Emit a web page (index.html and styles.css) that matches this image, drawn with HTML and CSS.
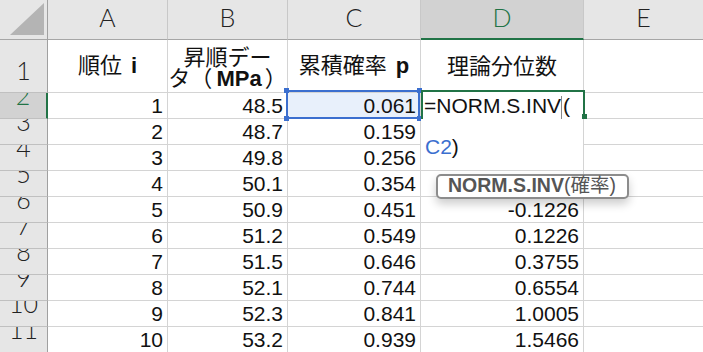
FILE: index.html
```html
<!DOCTYPE html>
<html lang="ja">
<head>
    <meta charset="UTF-8">
    <title>正規確率プロット</title>
    <link rel="stylesheet" href="styles.css">
</head>
<body>
    <div class="sheet">
        <div class="corner"><svg width="47" height="39" viewBox="0 0 47 39"><polygon points="10,35 44,35 44,3" fill="#b4b4b4"/></svg></div>
        <div class="col-head">A</div>
        <div class="col-head">B</div>
        <div class="col-head">C</div>
        <div class="col-head sel">D</div>
        <div class="col-head">E</div>

        <div class="row-head first"><span>1</span></div>
        <div class="cell title"><span>順位 <b>i</b></span></div>
        <div class="cell title two"><span>昇順デー<br>タ（<b>MPa</b>）</span></div>
        <div class="cell title"><span>累積確率 <b>p</b></span></div>
        <div class="cell title"><span>理論分位数</span></div>
        <div class="cell"></div>

        <div class="row-head sel"><span>2</span></div>
        <div class="cell">1</div>
        <div class="cell">48.5</div>
        <div class="cell ref-cell">0.061</div>
        <div class="cell"></div>
        <div class="cell"></div>

        <div class="row-head"><span>3</span></div>
        <div class="cell">2</div>
        <div class="cell">48.7</div>
        <div class="cell">0.159</div>
        <div class="cell">-1.0005</div>
        <div class="cell"></div>

        <div class="row-head"><span>4</span></div>
        <div class="cell">3</div>
        <div class="cell">49.8</div>
        <div class="cell">0.256</div>
        <div class="cell">-0.6554</div>
        <div class="cell"></div>

        <div class="row-head"><span>5</span></div>
        <div class="cell">4</div>
        <div class="cell">50.1</div>
        <div class="cell">0.354</div>
        <div class="cell">-0.3755</div>
        <div class="cell"></div>

        <div class="row-head"><span>6</span></div>
        <div class="cell">5</div>
        <div class="cell">50.9</div>
        <div class="cell">0.451</div>
        <div class="cell">-0.1226</div>
        <div class="cell"></div>

        <div class="row-head"><span>7</span></div>
        <div class="cell">6</div>
        <div class="cell">51.2</div>
        <div class="cell">0.549</div>
        <div class="cell">0.1226</div>
        <div class="cell"></div>

        <div class="row-head"><span>8</span></div>
        <div class="cell">7</div>
        <div class="cell">51.5</div>
        <div class="cell">0.646</div>
        <div class="cell">0.3755</div>
        <div class="cell"></div>

        <div class="row-head"><span>9</span></div>
        <div class="cell">8</div>
        <div class="cell">52.1</div>
        <div class="cell">0.744</div>
        <div class="cell">0.6554</div>
        <div class="cell"></div>

        <div class="row-head"><span>10</span></div>
        <div class="cell">9</div>
        <div class="cell">52.3</div>
        <div class="cell">0.841</div>
        <div class="cell">1.0005</div>
        <div class="cell"></div>

        <div class="row-head"><span>11</span></div>
        <div class="cell">10</div>
        <div class="cell">53.2</div>
        <div class="cell">0.939</div>
        <div class="cell">1.5466</div>
        <div class="cell"></div>

        <!-- cell being edited in D2, with its reference on C2 -->
        <div class="ref-box"><i class="tl"></i><i class="tr"></i><i class="bl"></i><i class="br"></i></div>
        <div class="editor">
            <div class="f1">=NORM.S.INV<span class="caret"></span>(</div>
            <div class="f2"><span class="ref-text">C2</span>)</div>
        </div>
        <div class="active"><i></i></div>
        <div class="tip"><b>NORM.S.INV</b>(確率)</div>
    </div>
</body>
</html>
```

FILE: styles.css
```css
body {
    margin: 0;
    padding: 0;
    background-color: #fff;
    overflow: hidden;
    font-family: 'Liberation Sans', 'Noto Sans CJK JP', sans-serif;
    color: #111;
}
.sheet {
    position: relative;
    display: grid;
    grid-template-columns: 48px 120px 120px 133px 163px 120px;
    grid-template-rows: 40px 53px repeat(10, 26px);
    width: 704px;
}
.sheet > div {
    box-sizing: border-box;
}
.corner {
    background-color: #e6e6e6;
    border-right: 1px solid #a0a0a0;
    border-bottom: 1px solid #a6a6a6;
}
.corner svg {
    display: block;
}
.col-head {
    background-color: #e6e6e6;
    border-right: 1px solid #c8c8c8;
    border-bottom: 1px solid #a6a6a6;
    font-family: Lato, sans-serif;
    font-weight: 300;
    font-size: 25px;
    line-height: 35px;
    text-align: center;
    color: #222;
}
.col-head.sel {
    background-color: #d2d2d2;
    color: #217346;
    border-bottom: 2px solid #217346;
}
.row-head {
    background-color: #e6e6e6;
    border-right: 1px solid #a0a0a0;
    border-bottom: 1px solid #c0c0c0;
    overflow: hidden;
    display: flex;
    justify-content: center;
    align-items: flex-start;
    font-family: Lato, sans-serif;
    font-weight: 300;
    font-size: 25px;
    color: #222;
}
.row-head span {
    line-height: 5px;
}
.row-head.first {
    align-items: flex-end;
    padding-bottom: 19px;
}
.row-head.sel {
    background-color: #d2d2d2;
    color: #217346;
    border-right: 2px solid #217346;
}
.cell {
    border-right: 1px solid #d4d4d4;
    border-bottom: 1px solid #d4d4d4;
    font-size: 21px;
    line-height: 25px;
    text-align: right;
    padding-right: 4px;
    white-space: nowrap;
}
.cell.title {
    display: flex;
    align-items: center;
    justify-content: center;
    text-align: center;
    padding: 0 0 4px 0;
    font-family: 'Noto Sans CJK JP', sans-serif;
    font-size: 22px;
    line-height: 22px;
    color: #111;
}
.cell.title b {
    font-family: 'Liberation Sans', sans-serif;
    font-weight: bold;
    margin-left: 4px;
}
.cell.title.two {
    line-height: 21px;
    padding: 1px 0 0 0;
}
.cell.title.two b {
    margin: 0 3px 0 4px;
}
.ref-cell {
    background-color: #e8f0fb;
}
.ref-box {
    position: absolute;
    left: 286px;
    top: 90px;
    width: 134px;
    height: 29px;
    border: 2px solid #3b6fcf;
}
.ref-box i {
    position: absolute;
    width: 5px;
    height: 5px;
    background-color: #3b6fcf;
}
.ref-box .tl { left: -4px; top: -4px; }
.ref-box .tr { right: -4px; top: -4px; }
.ref-box .bl { left: -4px; bottom: -4px; }
.ref-box .br { right: -4px; bottom: -4px; }
.editor {
    position: absolute;
    left: 421px;
    top: 92px;
    width: 162px;
    height: 78px;
    background-color: #fff;
    padding-left: 3px;
    font-size: 21px;
    white-space: nowrap;
}
.editor .f1 {
    margin-top: 1px;
    line-height: 25px;
}
.editor .f2 {
    margin-top: 15px;
    padding-left: 1px;
    line-height: 25px;
}
.caret {
    display: inline-block;
    width: 1px;
    height: 23px;
    margin-right: 1px;
    vertical-align: -6px;
    background-color: #888;
}
.ref-text {
    color: #3b6fcf;
}
.active {
    position: absolute;
    left: 421px;
    top: 90px;
    width: 164px;
    height: 29px;
    border: 2px solid #217346;
    border-bottom: none;
}
.active i {
    position: absolute;
    right: -4px;
    bottom: 0;
    width: 5px;
    height: 5px;
    background-color: #217346;
}
.tip {
    position: absolute;
    left: 436px;
    top: 174px;
    width: 193px;
    height: 25px;
    border: 2px solid #8c8c8c;
    border-radius: 5px;
    background-color: #fff;
    box-shadow: 0 5px 10px rgba(0, 0, 0, 0.2);
    padding-left: 10px;
    font-size: 19.5px;
    line-height: 19px;
    color: #555;
    white-space: nowrap;
}
```
